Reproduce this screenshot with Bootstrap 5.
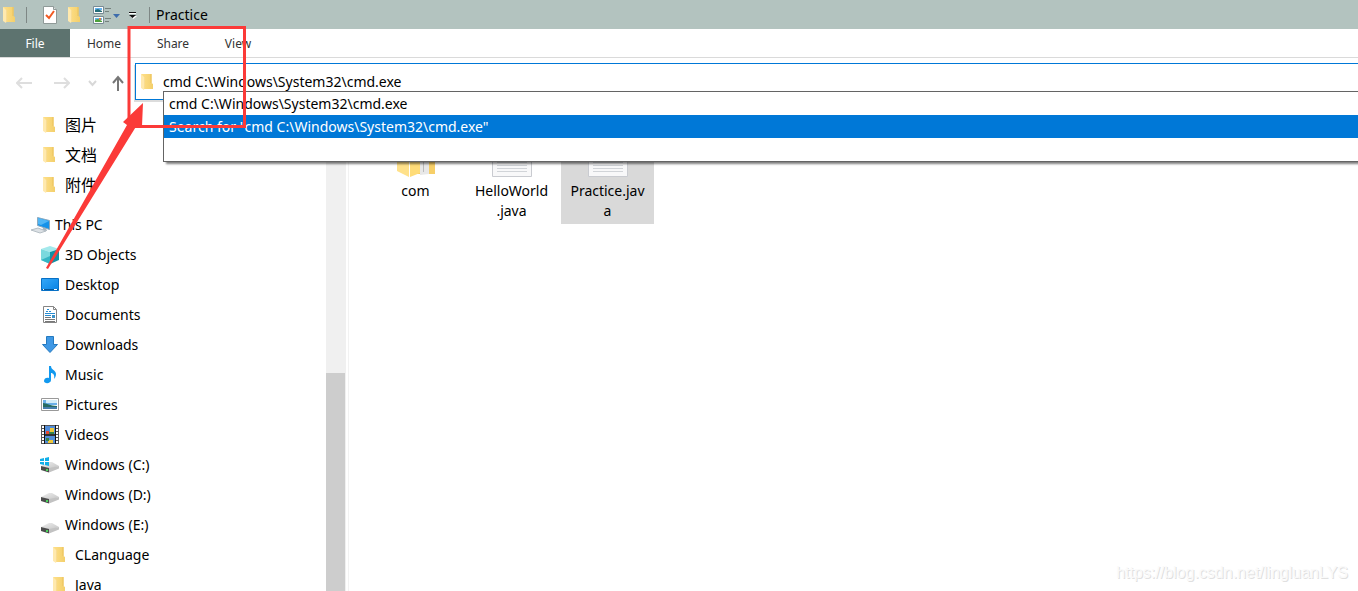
<!DOCTYPE html>
<html lang="en">
<head>
<meta charset="utf-8">
<meta name="viewport" content="width=device-width, initial-scale=1">
<title>Practice</title>
<link href="https://cdn.jsdelivr.net/npm/bootstrap@5.3.0/dist/css/bootstrap.min.css" rel="stylesheet">
<style>
body{font-family:"Noto Sans","Noto Sans CJK SC",sans-serif;font-size:14px;line-height:20px;color:#000;background:#fff}
svg{display:block;flex:none}
button{border:0;background:none;padding:0;color:inherit}
.titlebar{height:29px;background:#b3c3bf}
.titlebar h1{font-size:14px;line-height:20px;font-weight:400;margin:0 0 0 6px}
.sep{width:1px;height:16px;background:#7e8785;margin-left:6px}
.sep-title{margin-left:12px}
.tabs{height:29px;border-bottom:1px solid #dadada;font-size:12px}
.tabs a{color:#333;text-decoration:none;line-height:30px;text-align:center}
.tabs .file-tab{background:#5d736f;color:#fff;width:69px}
.tabs .file-tab{width:70px}
.tab-wide{width:68px}
.tab-mid{width:70px}
.tab-end{width:60px}
.addressbar{height:44px;padding:5px 0 0 16px}
.arrows{width:119px;height:40px}
.arrow-next{margin-left:22px}
.arrow-down{margin-left:18px}
.arrow-up{margin-left:15px}
.address{height:37px;border:1px solid #0078d7;border-right:0;box-shadow:-1px 2px 0 #dcdcdc;padding-left:4px}
.address input{border:0;outline:0;padding:0;margin-left:9px;background:none;height:30px}
.suggest{left:27px;right:0;top:27px;border:1px solid #646464;border-right:0;background:#fff;z-index:3;box-shadow:3px 2px 2px rgba(0,0,0,.5);height:71px}
.suggest button{display:block;width:100%;height:23px;line-height:23px;padding-left:5px;text-align:left;white-space:nowrap}
.suggest .chosen{background:#0078d7;color:#fff}
.tree{width:326px;padding:8px 0 0 30px}
.tree a{display:flex;align-items:center;height:30px;color:#000;text-decoration:none;white-space:nowrap}
.tree .pc{margin-top:10px;gap:4px}
.tree .sub{padding-left:10px;gap:5px}
.tree .deep{padding-left:20px;gap:5px}
.tree .cjk{font-size:16px}
.track{width:20px;background:#f0f0f0;padding-top:271px}
.thumb{width:19px;background:#cdcdcd}
.divider{width:1px;margin-left:2px;background:#f2f2f2}
.files{padding:20px 0 0 20px;gap:3px}
.file{width:93px;height:102px;color:#000;text-decoration:none;text-align:center}
.file svg{margin:0 auto 4px}
.file.selected{background:#d9d9d9}
.annotation{left:0;top:0;z-index:5;pointer-events:none}
.watermark{right:10px;bottom:8px;font:16px/20px "Liberation Sans",sans-serif;color:#fafafa;text-shadow:1px 1px 0 #e0e0e0}
</style>
<script src="https://cdn.jsdelivr.net/npm/bootstrap@5.3.0/dist/js/bootstrap.bundle.min.js"></script>
</head>
<body class="vh-100 overflow-hidden d-flex flex-column position-relative">
<svg width="0" height="0" class="position-absolute" aria-hidden="true">
<defs>
<linearGradient id="fold" x2="1"><stop stop-color="#ffe08a"/><stop offset="1" stop-color="#f3cf6b"/></linearGradient>
<linearGradient id="scr" x2="1" y2="1"><stop stop-color="#35a8f8"/><stop offset="1" stop-color="#0782e5"/></linearGradient>
<linearGradient id="metal" x2="1" y2="1"><stop stop-color="#eee"/><stop offset="1" stop-color="#c4c4c4"/></linearGradient>
<symbol id="folder" viewBox="0 0 20 20"><path fill="url(#fold)" d="M4 2h10.500v9l1.500 1v5H7z"/><path fill="#ebc25a" d="M13.500 2h1v9h-1z"/><path fill="#ffe9ae" d="M4 2l4 4v8l-1 4-3-2z"/><path fill="#f2d07a" d="M7.500 5.500h.5V15l-.5 2z"/></symbol>
<symbol id="drive" viewBox="0 0 20 20"><path fill="url(#metal)" d="M1 11l8-4h3l7 4-9 3z"/><path fill="#4c4c4c" d="M1 11l8 2v4.500l-8-2.500z"/><path fill="#c2c2c2" d="M9 13l10-2v2.500L9 17.500z"/><path fill="#4bd65a" d="M6 14h2v2H6z"/></symbol>
</defs>
</svg>

<header class="titlebar d-flex align-items-center flex-shrink-0">
<svg width="20" height="20"><use href="#folder" x="-1"/></svg>
<span class="sep"></span>
<button type="button" class="ms-3" aria-label="Properties"><svg width="14" height="18" viewBox="0 0 14 18"><path fill="#fff" stroke="#8f9a98" d="M.5.5h10l3 3v14H.5z"/><path fill="#ddd" stroke="#8f9a98" d="M10.500.5v3h3"/><path fill="none" stroke="#f05a22" stroke-width="2" d="M3 9l3 3 5-7"/></svg></button>
<button type="button" class="ms-2" aria-label="New folder"><svg width="20" height="20"><use href="#folder" x="-1"/></svg></button>
<button type="button" class="ms-2" aria-label="View layout"><svg width="28" height="18" viewBox="0 0 28 18"><path fill="#fff" stroke="#788b94" d="M.5.5h10v7H.5zM.5 10.500h10v7H.5z"/><path fill="#65b3ee" d="M2 2h7v2H2zM2 12h7v2H2z"/><path fill="#246d79" d="M2 4l3-1 4 2v1H2z"/><path fill="#4ca03c" d="M2 14l3-1 4 2v1H2z"/><path fill="#e4803c" d="M6 12h2v2H6z"/><path stroke="#75817e" d="M12 2.500h6M12 5.500h4M12 12.500h6M12 15.500h4"/><path fill="#3d6cac" d="M20 8h7l-3.500 4z"/></svg></button>
<button type="button" class="ms-2" aria-label="Customize toolbar"><svg width="8" height="8" viewBox="0 0 8 8"><path fill="#fff" d="M0 2h7v1H0zM1 5h7L4.500 8z"/><path fill="#111" d="M0 1h7v1H0zM0 4h7L3.500 7z"/></svg></button>
<span class="sep sep-title"></span>
<h1>Practice</h1>
</header>

<nav class="tabs d-flex flex-shrink-0" aria-label="Ribbon">
<a href="#" class="file-tab">File</a><a href="#" class="tab-wide">Home</a><a href="#" class="tab-mid">Share</a><a href="#" class="tab-end">View</a>
</nav>

<div class="addressbar d-flex flex-shrink-0">
<div class="arrows d-flex align-items-center flex-shrink-0">
<button type="button" aria-label="Back"><svg width="16" height="16" viewBox="0 0 16 16"><path fill="none" stroke="#dedede" stroke-width="2" d="M16 8H1M6 3L1 8l5 5"/></svg></button>
<button type="button" aria-label="Forward" class="arrow-next"><svg width="16" height="16" viewBox="0 0 16 16"><path fill="none" stroke="#dedede" stroke-width="2" d="M0 8h15M10 3l5 5-5 5"/></svg></button>
<button type="button" aria-label="Recent" class="arrow-down"><svg width="9" height="16" viewBox="0 0 9 16"><path fill="none" stroke="#d8d8d8" stroke-width="2" d="M1 6l3.500 4L8 6"/></svg></button>
<button type="button" aria-label="Up" class="arrow-up"><svg width="12" height="16" viewBox="0 0 12 16"><path fill="none" stroke="#777" stroke-width="2" d="M6 16V3M1 8l5-6 5 6"/></svg></button>
</div>
<div class="address d-flex align-items-center flex-grow-1 position-relative">
<svg width="14" height="20"><use href="#folder" width="20" height="20" x="-3"/></svg>
<input type="text" class="flex-grow-1" aria-label="Address" value="cmd C:\Windows\System32\cmd.exe">
<div class="suggest position-absolute">
<button type="button">cmd C:\Windows\System32\cmd.exe</button>
<button type="button" class="chosen">Search for "cmd C:\Windows\System32\cmd.exe"</button>
</div>
</div>
</div>

<main class="d-flex flex-grow-1 overflow-hidden">
<nav class="tree flex-shrink-0" aria-label="Folders">
<a href="#" class="sub cjk"><svg width="20" height="20"><use href="#folder" x="-1"/></svg>图片</a>
<a href="#" class="sub cjk"><svg width="20" height="20"><use href="#folder" x="-1"/></svg>文档</a>
<a href="#" class="sub cjk"><svg width="20" height="20"><use href="#folder" x="-1"/></svg>附件</a>
<a href="#" class="pc"><svg width="21" height="20" viewBox="0 0 21 20"><path fill="#1692e9" stroke="#8ca9bd" d="M7.500 2.500l12 3v9l-12-4z"/><path fill="#51b6f5" d="M8 3l11 3-8 4-3-1z"/><path fill="#a8b5bf" d="M13 13h3l1 3h-5z"/><path fill="#dce1e5" stroke="#b5bec5" d="M1 15l7-2 8 3-6 2z"/></svg>This PC</a>
<a href="#" class="sub"><svg width="20" height="20" viewBox="0 0 20 20"><path fill="#a4e9ec" d="M1 4l9-3 9 3-9 3z"/><path fill="#7ad9de" d="M1 4l9 3v12l-9-4z"/><path fill="#128fa4" d="M10 7l9-3v11l-9 4z"/><path fill="#35b5c4" d="M1 15l9-4v8z"/></svg>3D Objects</a>
<a href="#" class="sub"><svg width="20" height="20" viewBox="0 0 20 20"><path fill="url(#scr)" stroke="#0870c5" d="M1.500 3.500h17v12h-17z"/><path fill="#075799" d="M2 14h16v1H2z"/><path stroke="#fff" d="M3 14.500h1M14 14.500h3"/></svg>Desktop</a>
<a href="#" class="sub"><svg width="20" height="20" viewBox="0 0 20 20"><path fill="#fff" stroke="#858585" d="M3.500 1.500h10l3 3v13h-13z"/><path fill="none" stroke="#858585" d="M13.500 1.500v3h3"/><path stroke="#288bd0" d="M6 6.500h2M7 4.500h2M9 6.500h2M5 8.500h10M5 10.500h6"/><path fill="#3a91c7" d="M12 10h3v3h-3z"/><path stroke="#777" d="M5 12.500h6M5 14.500h10M5 16.500h10"/></svg>Documents</a>
<a href="#" class="sub"><svg width="20" height="20" viewBox="0 0 20 20"><path fill="#3f98e5" stroke="#2479bf" d="M6.500 1.500h7v8h4L10 17.500 2.500 9.500h4z"/></svg>Downloads</a>
<a href="#" class="sub"><svg width="20" height="20" viewBox="0 0 20 20"><path fill="#1299ef" d="M9 1h2c0 4 5 4 5 8 0 2-1 4-2 5 1-4-1-6-3-6v7c0 4-7 4-7 1s3-4 5-3z"/></svg>Music</a>
<a href="#" class="sub"><svg width="20" height="20" viewBox="0 0 20 20"><path fill="#fff" stroke="#999" d="M1.500 3.500h17v12h-17z"/><path fill="#6aafe8" d="M3 5h14v5H3z"/><path fill="#d4edf8" d="M6 5h11v3H6z"/><path fill="#276b62" d="M3 8c4 0 7 3 14 3v3H3z"/><path fill="#467ead" d="M3 12h14v2H3z"/></svg>Pictures</a>
<a href="#" class="sub"><svg width="20" height="20" viewBox="0 0 20 20"><path fill="#555" d="M1 0h18v19H1z"/><path stroke="#fff" stroke-width="2" stroke-dasharray="2 1" d="M3 1v17M17 1v17"/><path fill="#528dd9" d="M5 1h10v8H5zM5 11h10v7H5z"/><path fill="#e94932" d="M6 6h3v3H6z"/><path fill="#f0c83b" d="M10 3h4v4h-4zM8 15h5v3H8z"/><path fill="#378447" d="M9 7h5v2H9zM6 13h3v3H6z"/><path stroke="#111" d="M5 10h10M4.500 0v19M15.500 0v19"/></svg>Videos</a>
<a href="#" class="sub"><svg width="20" height="20"><use href="#drive"/><path fill="#10afe8" d="M0 4l4-1v3H0zM5 3l4-1v4H5zM0 7h4v3l-4-1zM5 7h4v4l-4-1z"/></svg>Windows (C:)</a>
<a href="#" class="sub"><svg width="20" height="20"><use href="#drive" y="1"/></svg>Windows (D:)</a>
<a href="#" class="sub"><svg width="20" height="20"><use href="#drive" y="1"/></svg>Windows (E:)</a>
<a href="#" class="deep"><svg width="20" height="20"><use href="#folder" x="-1"/></svg>CLanguage</a>
<a href="#" class="deep"><svg width="20" height="20"><use href="#folder" x="-1"/></svg>Java</a>
</nav>
<div class="track d-flex flex-shrink-0" aria-hidden="true"><div class="thumb"></div></div>
<div class="divider"></div>
<section class="files d-flex align-items-start" aria-label="Files">
<a href="#" class="file"><svg width="40" height="55" viewBox="0 0 40 55"><path fill="#f4cb64" d="M1 3h37v49H18z"/><path fill="#ffe18a" d="M1 3l12 8v44L1 49z"/><path fill="#ffdc78" d="M14 8h10v43l-10 4z"/><path fill="#e8e8e8" d="M24 8l9 3v41l-9 1z"/><path stroke="#bbb" d="M27.500 15v35"/><path fill="#f7cf68" d="M33 4h6v48h-6z"/></svg>com</a>
<a href="#" class="file"><svg width="40" height="55" viewBox="0 0 40 55"><path fill="#f8f8f9" stroke="#c9cbd0" d="M.5.5h31l8 8v46H.5z"/><path stroke="#d1d4d8" d="M5 34.500h30M5 37.500h30M5 40.500h30M5 43.500h30M5 46.500h30M5 49.500h30"/></svg>HelloWorld<br>.java</a>
<a href="#" class="file selected"><svg width="40" height="55" viewBox="0 0 40 55"><path fill="#f8f8f9" stroke="#c9cbd0" d="M.5.5h31l8 8v46H.5z"/><path stroke="#d1d4d8" d="M5 34.500h30M5 37.500h30M5 40.500h30M5 43.500h30M5 46.500h30M5 49.500h30"/></svg>Practice.jav<br>a</a>
</section>
</main>
<div class="watermark position-absolute">https://blog.csdn.net/lingluanLYS</div>
<svg class="annotation position-absolute" width="250" height="275" viewBox="0 0 250 275" aria-hidden="true"><path fill="none" stroke="#fb3a38" stroke-width="3" d="M129 27.500h115.500v99H129z"/><path fill="#fb3a38" d="M46 268L127 125 123 122 143 103 142 126 137 125 48 269z"/></svg>
</body>
</html>
